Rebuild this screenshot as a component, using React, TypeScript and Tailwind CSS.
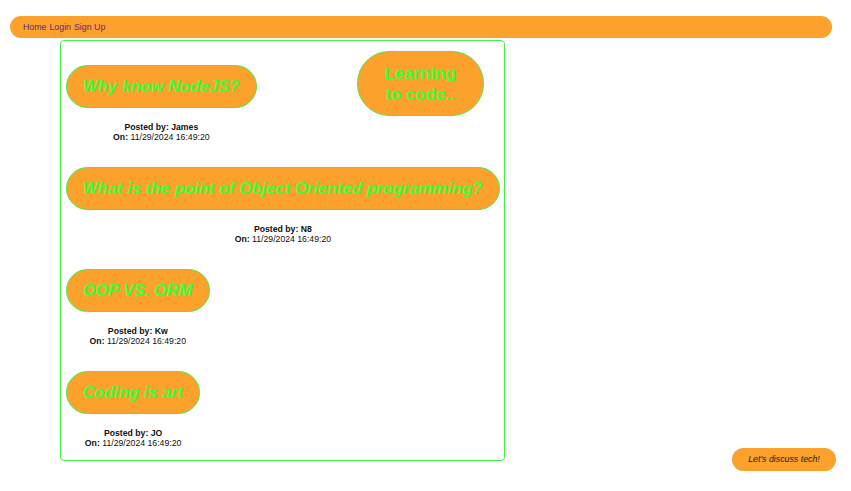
import React from "react";

const posts = [
  { title: "Why know NodeJS?", author: "James" },
  { title: "What is the point of Object Oriented programming?", author: "N8" },
  { title: "OOP VS. ORM", author: "Kw" },
  { title: "Coding is art", author: "JO" },
];

export default function App() {
  return (
    <div className="min-h-[491px] bg-white font-['Liberation_Sans',Arial,sans-serif] relative">
      {/* nav */}
      <nav className="ml-[10px] mr-[19px] pt-[16px]">
        <div className="h-[22px] rounded-full bg-[#fba12c] flex items-center pl-[13px] pt-[2px] text-[8.8px] text-[#5b2c83]">
          <a className="mr-[3px]">Home</a>
          <a className="mr-[3px]">Login</a>
          <a>Sign Up</a>
        </div>
      </nav>

      {/* posts box */}
      <main className="flow-root ml-[60px] mt-[2px] w-[445px] border border-[#44f044] rounded-[4px] pt-[24px] pb-[12px] pl-[5px]">
        <div className="float-right mt-[-14px] mr-[20px] w-[127px] h-[65px] rounded-[32px] bg-[#fba12c] border border-[#44f044] flex items-center justify-center text-center text-[17px] leading-[21px] font-bold text-[#3cff3c]">
          Learning
          <br />
          to code..
        </div>

        {posts.map((p) => (
          <div key={p.title} className="w-fit mb-[25px] last:mb-0">
            <div className="rounded-full bg-[#fba12c] border border-[#44f044] px-[16px] py-[11px] text-[16.4px] leading-[19px] font-bold italic text-[#3cff3c] whitespace-nowrap">
              {p.title}
            </div>
            <div className="mt-[14px] text-center text-[8.7px] leading-[10px] text-[#111]">
              <p className="font-bold">Posted by: {p.author}</p>
              <p>
                <span className="font-bold">On:</span> 11/29/2024 16:49:20
              </p>
            </div>
          </div>
        ))}
      </main>

      <button className="fixed right-[15px] bottom-[20px] w-[104px] h-[23px] rounded-full bg-[#fba12c] text-[8.8px] italic text-[#222]">
        Let's discuss tech!
      </button>
    </div>
  );
}
